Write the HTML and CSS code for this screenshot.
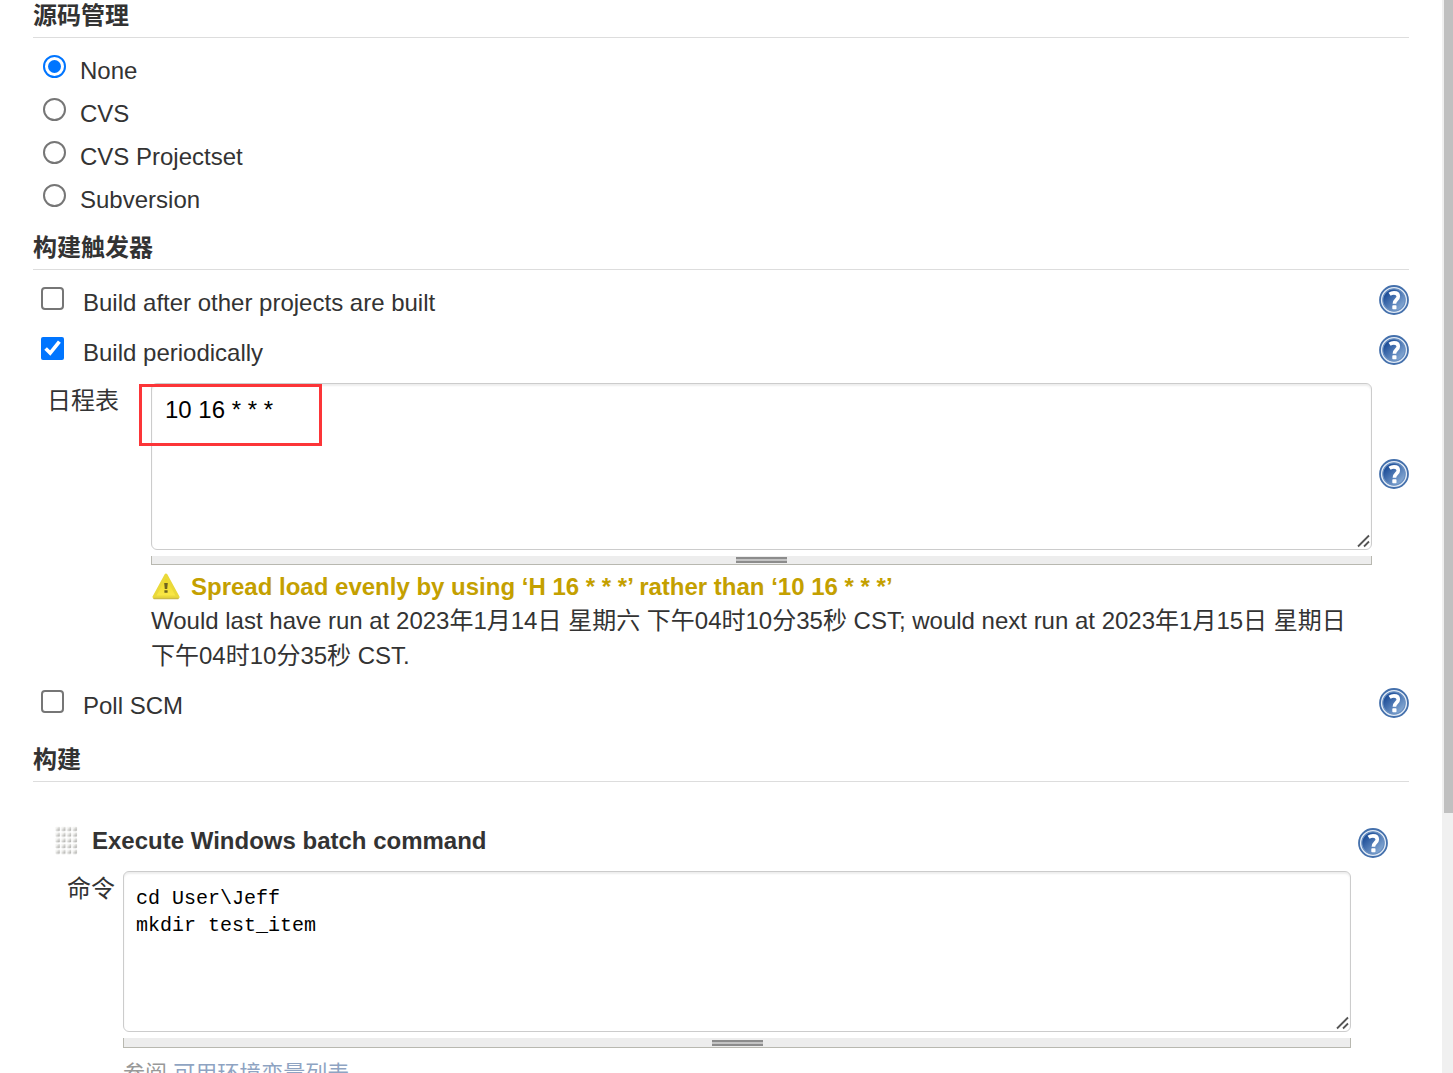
FILE: index.html
```html
<!DOCTYPE html>
<html lang="zh-CN">
<head>
    <meta charset="UTF-8">
    <meta name="viewport" content="width=device-width, initial-scale=1.0">
    <title>Jenkins</title>
    <link rel="stylesheet" href="styles.css">
</head>
<body>
    <!-- 共用图标 -->
    <svg class="defs" width="0" height="0" aria-hidden="true">
        <defs>
            <linearGradient id="help-fill" x1="0" y1="0" x2="1" y2="1">
                <stop offset="0.2" stop-color="#20509a"/>
                <stop offset="0.9" stop-color="#8db0d8"/>
            </linearGradient>
            <linearGradient id="warn-fill" x1="0" y1="0" x2="0" y2="1">
                <stop offset="0" stop-color="#e8d41c"/>
                <stop offset="1" stop-color="#fbe94a"/>
            </linearGradient>
            <linearGradient id="dot-fill" x1="0" y1="0" x2="1" y2="1">
                <stop offset="0.3" stop-color="#f4f4f2"/>
                <stop offset="1" stop-color="#a0a09c"/>
            </linearGradient>
            <pattern id="dots" width="5.7" height="5.7" patternUnits="userSpaceOnUse">
                <rect x="0.4" y="0.6" width="4.4" height="4.4" rx="1" fill="url(#dot-fill)"/>
            </pattern>
            <symbol id="help" viewBox="0 0 30 30">
                <circle cx="15" cy="15" r="14" fill="#e4ecf6" stroke="#4470ac" stroke-width="1.8"/>
                <circle cx="15" cy="15" r="11.2" fill="url(#help-fill)" stroke="#6a90c2" stroke-width="1.2"/>
                <path d="M10.6 9.2C12 8.2 13.4 7.9 15 7.9c2.6 0 4.3 1.2 4.3 3.5 0 3.2-3.9 3.4-3.9 7.4" fill="none" stroke="#fff" stroke-width="3.6"/>
                <rect x="13.3" y="20.2" width="4.2" height="4" rx="0.8" fill="#fff"/>
            </symbol>
            <symbol id="grip" viewBox="0 0 14 14">
                <path d="M1 12.5L12 1.5M7 12.5L12 7.5" fill="none" stroke="#555" stroke-width="1.8"/>
            </symbol>
        </defs>
    </svg>

    <main class="config">
        <!-- 源码管理 -->
        <h2>源码管理</h2>
        <div class="scm">
            <label class="radio-row"><input type="radio" name="scm" checked><span>None</span></label>
            <label class="radio-row"><input type="radio" name="scm"><span>CVS</span></label>
            <label class="radio-row"><input type="radio" name="scm"><span>CVS Projectset</span></label>
            <label class="radio-row"><input type="radio" name="scm"><span>Subversion</span></label>
        </div>

        <!-- 构建触发器 -->
        <h2>构建触发器</h2>
        <div class="triggers">
            <div class="check-row">
                <label><input type="checkbox"><span>Build after other projects are built</span></label>
                <button class="help" type="button" aria-label="Help"><svg><use href="#help"/></svg></button>
            </div>
            <div class="check-row">
                <label><input type="checkbox" checked><span>Build periodically</span></label>
                <button class="help" type="button" aria-label="Help"><svg><use href="#help"/></svg></button>
            </div>
            <div class="schedule">
                <label class="name" for="spec">日程表</label>
                <div class="field">
                    <div class="box">
                        <textarea id="spec" class="spec">10 16 * * *</textarea>
                        <svg class="grip"><use href="#grip"/></svg>
                        <div class="mark"></div>
                    </div>
                    <div class="handle"><span></span></div>
                </div>
                <button class="help" type="button" aria-label="Help"><svg><use href="#help"/></svg></button>
            </div>
            <div class="result">
                <div class="warning">
                    <svg class="warning-icon" viewBox="0 0 28 28">
                        <path d="M14 3L26 25H2z" fill="url(#warn-fill)" stroke="#ead93a" stroke-width="3" stroke-linejoin="round"/>
                        <path d="M2 26.5h24" stroke="#cdbb45" stroke-width="1.5" stroke-linecap="round"/>
                        <path d="M12.2 11h3.6l-.6 6h-2.4zM12.4 18.2h3.2v2.6h-3.2z" fill="#6e6320"/>
                    </svg>
                    <span>Spread load evenly by using ‘H 16 * * *’ rather than ‘10 16 * * *’</span>
                </div>
                <div>Would last have run at 2023年1月14日 星期六 下午04时10分35秒 CST; would next run at 2023年1月15日 星期日 下午04时10分35秒 CST.</div>
            </div>
            <div class="check-row">
                <label><input type="checkbox"><span>Poll SCM</span></label>
                <button class="help" type="button" aria-label="Help"><svg><use href="#help"/></svg></button>
            </div>
        </div>

        <!-- 构建 -->
        <h2>构建</h2>
        <div class="builder">
            <div class="builder-head">
                <svg class="drag"><rect width="23" height="29" fill="url(#dots)"/></svg>
                <h3>Execute Windows batch command</h3>
                <button class="help" type="button" aria-label="Help"><svg><use href="#help"/></svg></button>
            </div>
            <div class="command">
                <label class="name" for="command">命令</label>
                <div class="field">
                    <div class="box">
                        <textarea id="command" class="code" spellcheck="false">cd User\Jeff
mkdir test_item</textarea>
                        <svg class="grip"><use href="#grip"/></svg>
                    </div>
                    <div class="handle"><span></span></div>
                    <div class="see">参阅 <a href="#">可用环境变量列表</a></div>
                </div>
            </div>
        </div>
    </main>
    <div class="scrollbar"><div class="thumb"></div></div>
</body>
</html>
```

FILE: styles.css
```css
* {
    box-sizing: border-box;
}
body {
    display: flex;
    height: 100vh;
    margin: 0;
    overflow: hidden;
    background: #fff;
    color: #333;
    font-family: "Liberation Sans", Arial, "Noto Sans CJK SC", sans-serif;
    font-size: 24px;
    line-height: 35px;
}
.defs {
    position: absolute;
}
.config {
    flex: 1;
    min-width: 0;
    padding: 0 33px;
}
h2 {
    margin: 0;
    padding-bottom: 5px;
    border-bottom: 1px solid #ddd;
    font-size: 24px;
    line-height: 32px;
}
h3 {
    flex: 1;
    margin: 0;
    font-size: 24px;
}

/* 单选和复选 */
.scm {
    padding: 11px 0 11px 10px;
}
.radio-row {
    display: flex;
    height: 43px;
    align-items: center;
}
input {
    flex: none;
    width: 23px;
    height: 23px;
    margin: 0 14px 8px 0;
}
input[type="radio"],
input:not(:checked) {
    appearance: none;
    border: 2px solid #767676;
    border-radius: 4px;
    background: #fff;
}
input[type="radio"] {
    padding: 3px;
    border-radius: 50%;
}
input[type="radio"]:checked {
    border-color: #0075ff;
    background: #0075ff content-box;
}
.check-row {
    display: flex;
    height: 50px;
    padding-left: 8px;
    align-items: center;
    justify-content: space-between;
}
.check-row label {
    display: flex;
    align-items: center;
}
.check-row input {
    margin-right: 19px;
}
.triggers {
    padding: 7px 0 14px;
}

/* 帮助按钮 */
.help {
    flex: none;
    width: 30px;
    height: 30px;
    margin: 0 0 5px;
    padding: 0;
    border: none;
    background: none;
    cursor: pointer;
}
.help svg {
    display: block;
    width: 30px;
    height: 30px;
}

/* 输入区域 */
.schedule {
    display: flex;
    padding-top: 6px;
}
.schedule .name {
    width: 118px;
    padding-left: 14px;
}
.schedule .help {
    align-self: center;
    margin: 0 0 0 7px;
}
.field {
    flex: 1;
    min-width: 0;
}
.box {
    position: relative;
}
textarea {
    display: block;
    width: 100%;
    padding: 8px 12px;
    border: 1px solid #ccc;
    border-radius: 6px;
    box-shadow: inset 0 2px 2px #eee;
    background: #fff;
    color: #000;
    outline: none;
    resize: none;
}
.spec {
    height: 167px;
    padding-left: 13px;
    font-family: "Liberation Sans", Arial, sans-serif;
    font-size: 24px;
    line-height: 35px;
}
.code {
    height: 161px;
    padding-top: 13px;
    font-family: "Liberation Mono", monospace;
    font-size: 20px;
    line-height: 27px;
}
.grip {
    position: absolute;
    right: 1px;
    bottom: 2px;
    width: 14px;
    height: 14px;
}
.mark {
    position: absolute;
    top: 1px;
    left: -12px;
    width: 183px;
    height: 62px;
    border: 3px solid #fc3538;
}
.handle {
    display: flex;
    height: 9px;
    margin-top: 6px;
    border: 1px solid #b8b8b0;
    border-top: none;
    background: #ededed;
    align-items: center;
    justify-content: center;
}
.command .handle {
    height: 10px;
}
.handle span {
    width: 51px;
    height: 6px;
    border-top: 2px solid #8c8c8c;
    border-bottom: 2px solid #8c8c8c;
    background: #c4c4c4;
}

/* 检查结果 */
.result {
    padding: 4px 37px 7px 118px;
}
.warning {
    display: flex;
    height: 34px;
    color: #c4a000;
    font-weight: bold;
    align-items: center;
}
.warning-icon {
    width: 28px;
    height: 28px;
    margin: 0 11px 0 1px;
}

/* 构建步骤 */
.builder {
    padding: 41px 21px 0 22px;
}
.builder-head {
    display: flex;
    align-items: center;
}
.builder-head .help {
    margin: 4px 0 0;
}
.drag {
    width: 23px;
    height: 29px;
    margin-right: 14px;
}
.command {
    display: flex;
    padding: 13px 37px 0 0;
}
.command .name {
    width: 68px;
    padding-left: 12px;
}
.see {
    padding-top: 8px;
    opacity: 0.5;
    font-size: 22px;
}
.see a {
    color: #204a87;
    text-decoration: none;
}

/* 滚动条 */
.scrollbar {
    width: 11px;
    padding-left: 2px;
    background: #f0f0f0;
}
.thumb {
    height: 813px;
    background: #c0c0c0;
}
```
